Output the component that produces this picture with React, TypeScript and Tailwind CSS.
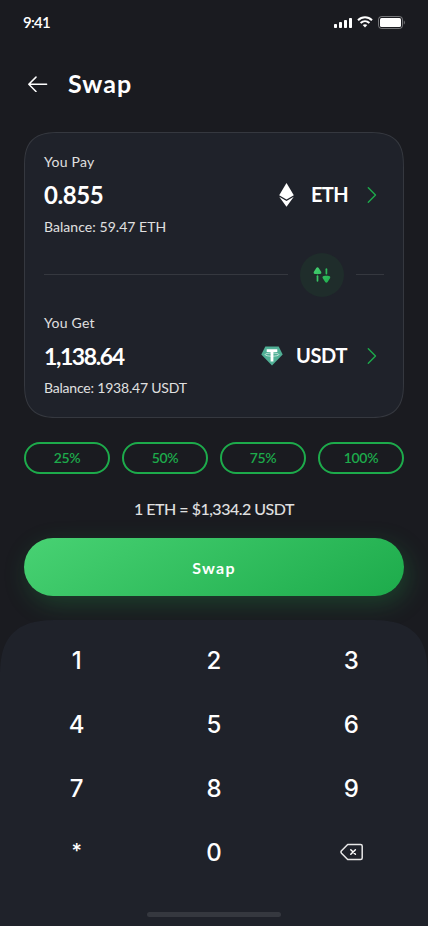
import { ReactNode } from "react";

const percents = ["25%", "50%", "75%", "100%"];
const keys = ["1", "2", "3", "4", "5", "6", "7", "8", "9", "*", "0"];

const StatusBar = () => (
  <div className="flex h-11 items-center justify-between pl-[23px] pr-[23px]">
    <span className="text-[15px] font-semibold tracking-[-0.7px]">9:41</span>
    <div className="flex items-center">
      <svg width="18" height="11" viewBox="0 0 18 11" fill="#fff">
        <rect x="0" y="7" width="3" height="4" rx="0.8" />
        <rect x="5" y="5" width="3" height="6" rx="0.8" />
        <rect x="10" y="3" width="3" height="8" rx="0.8" />
        <rect x="15" y="1" width="3" height="10" rx="0.8" />
      </svg>
      <svg className="ml-[5px]" width="16" height="12" viewBox="0 0 16 12" fill="none" stroke="#fff" strokeWidth="2">
        <path d="M1 4.2C5 0.3 11 0.3 15 4.2" />
        <path d="M3.6 7C6.2 4.5 9.8 4.5 12.4 7" />
        <path d="M5.7 9.1C7 8 9 8 10.3 9.1L8 11.4Z" fill="#fff" stroke="none" />
      </svg>
      <svg className="ml-[5px]" width="27" height="13" viewBox="0 0 27 13">
        <rect x="0.5" y="0.5" width="24" height="12" rx="3" fill="none" stroke="#fff" strokeOpacity="0.4" />
        <rect x="2" y="2" width="21" height="9" rx="1.5" fill="#fff" />
        <path d="M25.8 4.5C27.2 5.2 27.2 7.8 25.8 8.5Z" fill="#fff" fillOpacity="0.4" />
      </svg>
    </div>
  </div>
);

const EthIcon = () => (
  <svg className="mb-px" width="16" height="24" viewBox="0 0 16 24" fill="#fff">
    <path d="M8.5 0L15.8 12.2L8.5 16.4L1.2 12.2Z" />
    <path d="M1.2 13.7L8.5 18L15.8 13.7L8.5 23.8Z" />
  </svg>
);

const UsdtIcon = () => (
  <svg width="22" height="20" viewBox="0 0 22 20">
    <path d="M4.3 0.4H17.7L21.7 8.5L11 19.4L0.3 8.5Z" fill="#50AF95" />
    <path d="M5.7 3.2H16.3V5.9H12.4V15.6H9.6V5.9H5.7Z" fill="#fff" />
    <ellipse cx="11" cy="8.6" rx="6.9" ry="1.6" fill="none" stroke="#fff" strokeWidth="0.6" />
  </svg>
);

const Chevron = () => (
  <svg className="mb-px" width="10" height="18" viewBox="0 0 10 18" fill="none" stroke="#1DAB4B" strokeWidth="1.4" strokeLinecap="round" strokeLinejoin="round">
    <path d="M1.3 1.8L8.5 9L1.3 16.2" />
  </svg>
);

const SwapIcon = () => (
  <svg width="18" height="18" viewBox="0 0 18 18" fill="none">
    <defs>
      <linearGradient id="swapGrad" x1="0" y1="0" x2="18" y2="18" gradientUnits="userSpaceOnUse">
        <stop stopColor="#48D273" />
        <stop offset="1" stopColor="#1DAB4B" />
      </linearGradient>
    </defs>
    <path
      d="M4.5 1.2C5 1.2 5.3 1.5 5.7 2L8.1 5.8C8.7 6.9 8.3 7.9 7 8C5.3 8.2 3.7 8.2 2 8C0.7 7.9 0.3 6.9 0.9 5.8L3.3 2C3.7 1.5 4 1.2 4.5 1.2Z"
      fill="url(#swapGrad)"
    />
    <path
      d="M13.4 16.8C12.9 16.8 12.6 16.5 12.2 16L9.8 12.2C9.2 11.1 9.6 10.1 10.9 10C12.6 9.8 14.2 9.8 15.9 10C17.2 10.1 17.6 11.1 17 12.2L14.6 16C14.2 16.5 13.9 16.8 13.4 16.8Z"
      fill="url(#swapGrad)"
    />
    <path d="M4.5 10.2V14.8" stroke="#37C364" strokeWidth="1.7" strokeLinecap="round" />
    <path d="M13.4 3.2V7.6" stroke="#2FBC5D" strokeWidth="1.7" strokeLinecap="round" />
  </svg>
);

interface TokenRowProps {
  label: string;
  amount: ReactNode;
  balance: ReactNode;
  icon: ReactNode;
  symbol: ReactNode;
}

const TokenRow = ({ label, amount, balance, icon, symbol }: TokenRowProps) => (
  <div>
    <p className="h-5 text-[14px] leading-5 tracking-[0.25px] text-[#E0E0E0]">{label}</p>
    <div className="mt-2 flex h-[30px] items-center justify-between">
      {amount}
      <div className="flex items-center pr-[7px]">
        {icon}
        {symbol}
        <Chevron />
      </div>
    </div>
    <p className="mt-[7px] h-5 text-[14px] leading-5 text-[#E0E0E0]">{balance}</p>
  </div>
);

export default function App() {
  return (
    <div className="flex h-[926px] w-[428px] flex-col overflow-hidden bg-[#1A1B20] font-['Lato',sans-serif] text-white">
      <StatusBar />

      <header className="flex h-20 items-center pl-7">
        <svg width="20" height="16" viewBox="0 0 20 16" fill="none" stroke="#fff" strokeWidth="1.5" strokeLinecap="round" strokeLinejoin="round">
          <path d="M18.6 8.3H0.8M8 1.1L0.8 8.3L8 15.5" />
        </svg>
        <h1 className="ml-5 text-[25px] font-bold tracking-[1px]">Swap</h1>
      </header>

      <section className="mx-6 mt-2 h-[286px] rounded-[36px] border border-[#35383F] bg-[#1F222A] p-[19px] [corner-shape:superellipse(1.5)]">
        <TokenRow
          label="You Pay"
          amount={<span className="text-[24px] font-bold tracking-[-0.4px]">0.855</span>}
          balance={<span className="tracking-[0.05px]">Balance: 59.47 ETH</span>}
          icon={<EthIcon />}
          symbol={<span className="mb-0.5 ml-[17px] mr-[19px] text-[20px] font-bold tracking-[-0.6px]">ETH</span>}
        />
        <div className="my-4 flex h-11 items-center">
          <span className="relative -top-px h-px flex-1 bg-[#35383F]" />
          <button className="mx-3 flex size-11 items-center justify-center rounded-full bg-[#1F2D2B]">
            <SwapIcon />
          </button>
          <span className="relative -top-px h-px w-7 bg-[#35383F]" />
        </div>
        <TokenRow
          label="You Get"
          amount={<span className="text-[23px] font-bold tracking-[-1.4px]">1,138.64</span>}
          balance={<span className="tracking-[-0.2px]">Balance: 1938.47 USDT</span>}
          icon={<UsdtIcon />}
          symbol={<span className="mb-0.5 ml-[13px] mr-5 text-[20px] font-bold tracking-[-0.4px]">USDT</span>}
        />
      </section>

      <div className="mx-6 mt-6 grid grid-cols-4 gap-3">
        {percents.map((p) => (
          <button key={p} className="h-8 rounded-full border-2 border-[#1DAB4B] text-[14px] font-semibold leading-5 tracking-[-0.3px] text-[#1DAB4B]">
            {p}
          </button>
        ))}
      </div>

      <p className="mt-6 h-[22px] text-center text-[16px] font-medium leading-[22px] tracking-[-0.5px] text-[#E0E0E0]">1 ETH = $1,334.2 USDT</p>

      <button className="mx-6 mt-[18px] h-[58px] shrink-0 rounded-full bg-[linear-gradient(150deg,#48D273_0%,#1DAB4B_100%)] pt-px text-[16px] font-bold tracking-[1.3px] shadow-[4px_8px_24px_rgba(36,175,81,0.25)]">
        Swap
      </button>

      <div className="relative mt-6 flex flex-1 flex-col rounded-t-[60px] bg-[#1F222A] px-2 pt-[9px] [corner-shape:superellipse(1.5)]">
        <div className="grid grid-cols-3 font-['Inter',sans-serif] text-[24px] font-medium">
          {keys.map((k) => (
            <button key={k} className={k === "*" ? "h-16 pb-1 text-[20px]" : "h-16"}>
              {k}
            </button>
          ))}
          <button className="flex h-16 items-center justify-center pb-0.5 pl-0.5">
            <svg width="24" height="18" viewBox="0 0 24 18" fill="none" stroke="#E8E8E8" strokeWidth="1.5" strokeLinecap="round" strokeLinejoin="round">
              <path d="M7.7 1.5H20.5C21.6 1.5 22.2 2.1 22.2 3V15C22.2 15.9 21.6 16.5 20.5 16.5H7.7L1.5 10.2C0.9 9.5 0.9 8.5 1.5 7.8Z" />
              <path d="M10.8 6.7L15.4 11.3M15.4 6.7L10.8 11.3" stroke="#fff" />
            </svg>
          </button>
        </div>
        <div className="mx-auto mb-[9px] mt-auto h-[5px] w-[134px] rounded-full bg-[#35383F]" />
      </div>
    </div>
  );
}
